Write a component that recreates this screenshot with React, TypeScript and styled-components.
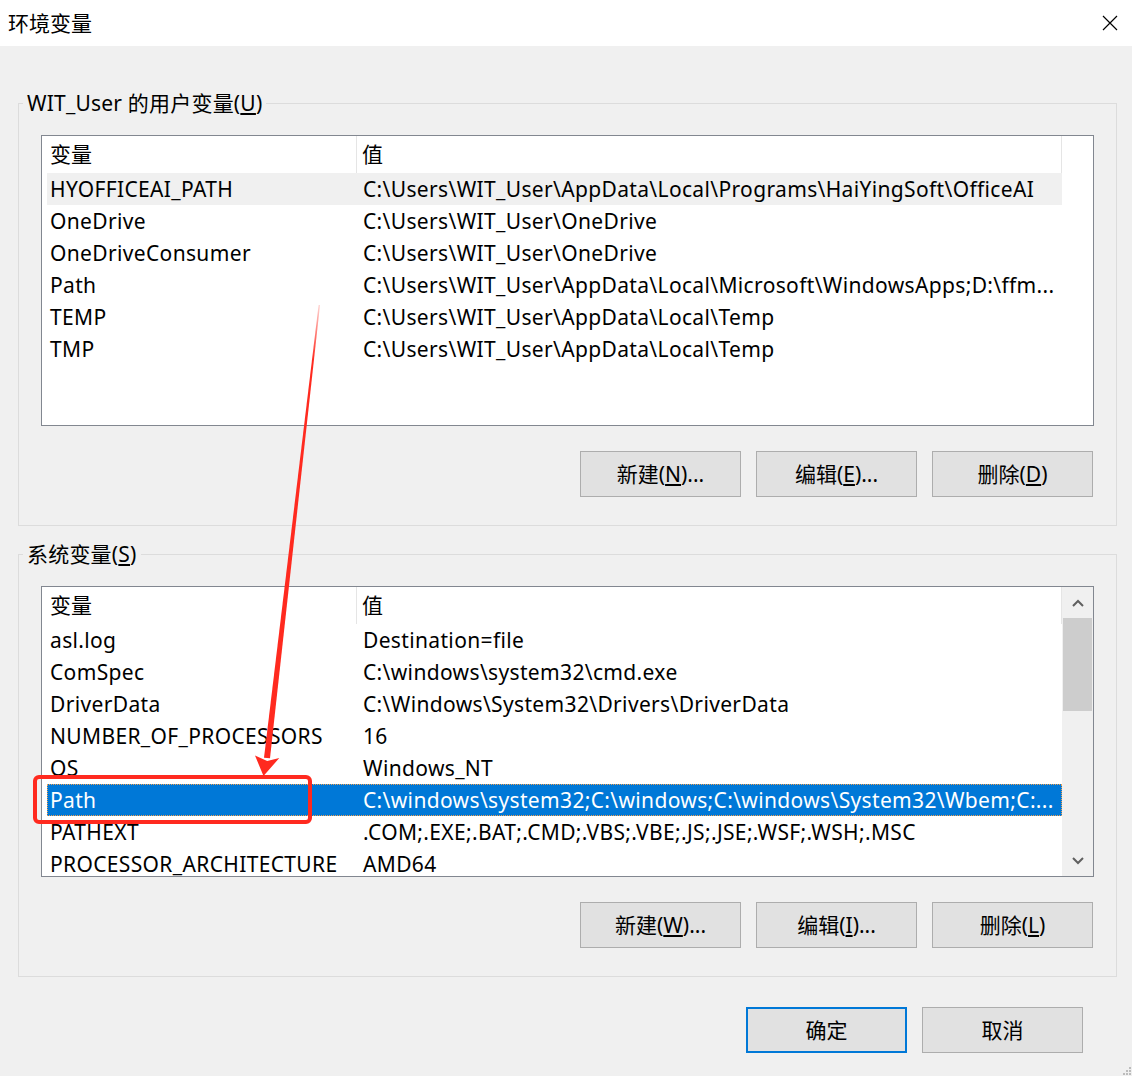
import React from "react";
import styled, { createGlobalStyle } from "styled-components";

const Global = createGlobalStyle`
  html, body { margin: 0; padding: 0; background: #f0f0f0; }
  #root { width: 1132px; height: 1076px; }
  * { box-sizing: border-box; }
`;

const Window = styled.div`
  position: relative;
  width: 1132px;
  height: 1076px;
  background: #f0f0f0;
  overflow: hidden;
  display: flex;
  flex-direction: column;
  font-family: "Noto Sans", "Noto Sans CJK SC", sans-serif;
  font-size: 21px;
  color: #000;
`;

const TitleBar = styled.div`
  height: 46px;
  flex-shrink: 0;
  background: #fff;
  display: flex;
  align-items: center;
  justify-content: space-between;
  padding-left: 8px;
`;

const Title = styled.div`
  line-height: 28px;
`;

const CloseButton = styled.div`
  width: 44px;
  height: 46px;
  display: flex;
  align-items: center;
  justify-content: center;
`;

const Group = styled.fieldset<{ $top: number }>`
  margin: ${(p) => p.$top}px 15px 0 18px;
  padding: 0;
  border: 1px solid #dcdcdc;
  min-width: 0;
`;

const Legend = styled.legend`
  margin-left: 4px;
  padding: 0 4px;
  line-height: 28px;
  letter-spacing: 0.2px;
`;

const GroupBody = styled.div`
  padding: 18px 22px 28px;
  display: flex;
  flex-direction: column;
  gap: 25px;
`;

const ListBox = styled.div`
  height: 291px;
  border: 1px solid #828790;
  background: #fff;
  display: grid;
  grid-template-columns: 1fr 31px;
  overflow: hidden;
`;

const ListContent = styled.div`
  display: flex;
  flex-direction: column;
  overflow: hidden;
`;

const HeaderRow = styled.div`
  height: 37px;
  flex-shrink: 0;
  display: grid;
  grid-template-columns: 315px 1fr;
  border-right: 1px solid #e5e5e5;
`;

const HeaderCell = styled.div<{ $first?: boolean }>`
  line-height: 36px;
  padding-left: ${(p) => (p.$first ? 8 : 5)}px;
  border-right: ${(p) => (p.$first ? "1px solid #e5e5e5" : "none")};
`;

const Row = styled.div<{ $state?: "hover" | "selected" }>`
  height: 32px;
  flex-shrink: 0;
  margin-left: 5px;
  display: grid;
  grid-template-columns: 310px 1fr;
  background: ${(p) =>
    p.$state === "selected" ? "#0078d7" : p.$state === "hover" ? "#f0f0f0" : "transparent"};
  color: ${(p) => (p.$state === "selected" ? "#fff" : "#000")};
  outline: ${(p) => (p.$state === "selected" ? "1px dotted #f0a050" : "none")};
  outline-offset: -1px;
`;

const Cell = styled.div<{ $first?: boolean }>`
  line-height: 32px;
  padding-left: ${(p) => (p.$first ? 3 : 6)}px;
  letter-spacing: 0.35px;
  white-space: nowrap;
  overflow: hidden;
  text-overflow: ellipsis;
`;

const ScrollTrack = styled.div<{ $visible: boolean }>`
  background: ${(p) => (p.$visible ? "#f0f0f0" : "#fff")};
  display: flex;
  flex-direction: column;
`;

const ScrollArrow = styled.div`
  height: 31px;
  flex-shrink: 0;
  display: flex;
  align-items: center;
  justify-content: center;
`;

const ScrollSpace = styled.div`
  flex: 1;
  padding: 0 1px;
`;

const ScrollThumb = styled.div`
  height: 93px;
  background: #cdcdcd;
`;

const ButtonRow = styled.div`
  display: flex;
  justify-content: flex-end;
  gap: 15px;
  padding-right: 1px;
`;

const Button = styled.div<{ $default?: boolean }>`
  width: 161px;
  height: 46px;
  background: #e1e1e1;
  border: ${(p) => (p.$default ? "2px solid #0078d7" : "1px solid #adadad")};
  display: flex;
  align-items: center;
  justify-content: center;
  line-height: 28px;
  white-space: nowrap;
`;

const Footer = styled.div`
  margin-top: 30px;
  padding-right: 49px;
  display: flex;
  justify-content: flex-end;
  gap: 15px;
`;

const Overlay = styled.svg`
  position: absolute;
  left: 0;
  top: 0;
  pointer-events: none;
`;

const Grip = styled.svg`
  position: absolute;
  right: 0;
  bottom: 0;
`;

type Item = [string, string];

const userVars: Item[] = [
  ["HYOFFICEAI_PATH", "C:\\Users\\WIT_User\\AppData\\Local\\Programs\\HaiYingSoft\\OfficeAI"],
  ["OneDrive", "C:\\Users\\WIT_User\\OneDrive"],
  ["OneDriveConsumer", "C:\\Users\\WIT_User\\OneDrive"],
  ["Path", "C:\\Users\\WIT_User\\AppData\\Local\\Microsoft\\WindowsApps;D:\\ffm..."],
  ["TEMP", "C:\\Users\\WIT_User\\AppData\\Local\\Temp"],
  ["TMP", "C:\\Users\\WIT_User\\AppData\\Local\\Temp"],
];

const sysVars: Item[] = [
  ["asl.log", "Destination=file"],
  ["ComSpec", "C:\\windows\\system32\\cmd.exe"],
  ["DriverData", "C:\\Windows\\System32\\Drivers\\DriverData"],
  ["NUMBER_OF_PROCESSORS", "16"],
  ["OS", "Windows_NT"],
  ["Path", "C:\\windows\\system32;C:\\windows;C:\\windows\\System32\\Wbem;C:..."],
  ["PATHEXT", ".COM;.EXE;.BAT;.CMD;.VBS;.VBE;.JS;.JSE;.WSF;.WSH;.MSC"],
  ["PROCESSOR_ARCHITECTURE", "AMD64"],
];

const Chevron = ({ up }: { up: boolean }) => (
  <svg width="12" height="8" viewBox="0 0 12 8">
    <path
      d={up ? "M1 7 L6 2 L11 7" : "M1 1 L6 6 L11 1"}
      fill="none"
      stroke="#606060"
      strokeWidth="2"
    />
  </svg>
);

const VarList = ({
  items,
  hover,
  selected,
  scroll,
}: {
  items: Item[];
  hover?: number;
  selected?: number;
  scroll?: boolean;
}) => (
  <ListBox>
    <ListContent>
      <HeaderRow>
        <HeaderCell $first>变量</HeaderCell>
        <HeaderCell>值</HeaderCell>
      </HeaderRow>
      {items.map(([k, v], i) => (
        <Row key={k + i} $state={i === selected ? "selected" : i === hover ? "hover" : undefined}>
          <Cell $first>{k}</Cell>
          <Cell>{v}</Cell>
        </Row>
      ))}
    </ListContent>
    <ScrollTrack $visible={!!scroll}>
      {scroll && (
        <>
          <ScrollArrow>
            <Chevron up />
          </ScrollArrow>
          <ScrollSpace>
            <ScrollThumb />
          </ScrollSpace>
          <ScrollArrow>
            <Chevron up={false} />
          </ScrollArrow>
        </>
      )}
    </ScrollTrack>
  </ListBox>
);

export default function App() {
  return (
    <Window>
      <Global />
      <TitleBar>
        <Title>环境变量</Title>
        <CloseButton>
          <svg width="16" height="16" viewBox="0 0 16 16">
            <path d="M1 1 L15 15 M15 1 L1 15" stroke="#000" strokeWidth="1.2" />
          </svg>
        </CloseButton>
      </TitleBar>

      <Group $top={43}>
        <Legend>
          WIT_User 的用户变量(<u>U</u>)
        </Legend>
        <GroupBody>
          <VarList items={userVars} hover={0} />
          <ButtonRow>
            <Button>
              新建(<u>N</u>)...
            </Button>
            <Button>
              编辑(<u>E</u>)...
            </Button>
            <Button>
              删除(<u>D</u>)
            </Button>
          </ButtonRow>
        </GroupBody>
      </Group>

      <Group $top={14}>
        <Legend>
          系统变量(<u>S</u>)
        </Legend>
        <GroupBody>
          <VarList items={sysVars} selected={5} scroll />
          <ButtonRow>
            <Button>
              新建(<u>W</u>)...
            </Button>
            <Button>
              编辑(<u>I</u>)...
            </Button>
            <Button>
              删除(<u>L</u>)
            </Button>
          </ButtonRow>
        </GroupBody>
      </Group>

      <Footer>
        <Button $default>确定</Button>
        <Button>取消</Button>
      </Footer>

      <Overlay width="1132" height="1076" viewBox="0 0 1132 1076">
        <defs>
          <linearGradient id="shaft" x1="0" y1="305" x2="0" y2="760" gradientUnits="userSpaceOnUse">
            <stop offset="0" stopColor="#ff2a1f" stopOpacity="0.2" />
            <stop offset="0.12" stopColor="#ff2a1f" stopOpacity="1" />
            <stop offset="1" stopColor="#ff2a1f" stopOpacity="1" />
          </linearGradient>
        </defs>
        <polygon points="318.6,305 320,305 270,758.3 264,757.7" fill="url(#shaft)" />
        <polygon points="263.5,776 279.3,758 267.2,761 255,755.5" fill="#ff2a1f" />
        <rect x="35" y="777" width="275" height="45" rx="4" fill="none" stroke="#ff2a1f" strokeWidth="4" />
      </Overlay>

      <Grip width="10" height="10" viewBox="0 0 10 10">
        <rect x="7" y="1" width="2" height="2" fill="#bcbcbc" />
        <rect x="4" y="4" width="2" height="2" fill="#bcbcbc" />
        <rect x="7" y="4" width="2" height="2" fill="#bcbcbc" />
        <rect x="1" y="7" width="2" height="2" fill="#bcbcbc" />
        <rect x="4" y="7" width="2" height="2" fill="#bcbcbc" />
        <rect x="7" y="7" width="2" height="2" fill="#bcbcbc" />
      </Grip>
    </Window>
  );
}
